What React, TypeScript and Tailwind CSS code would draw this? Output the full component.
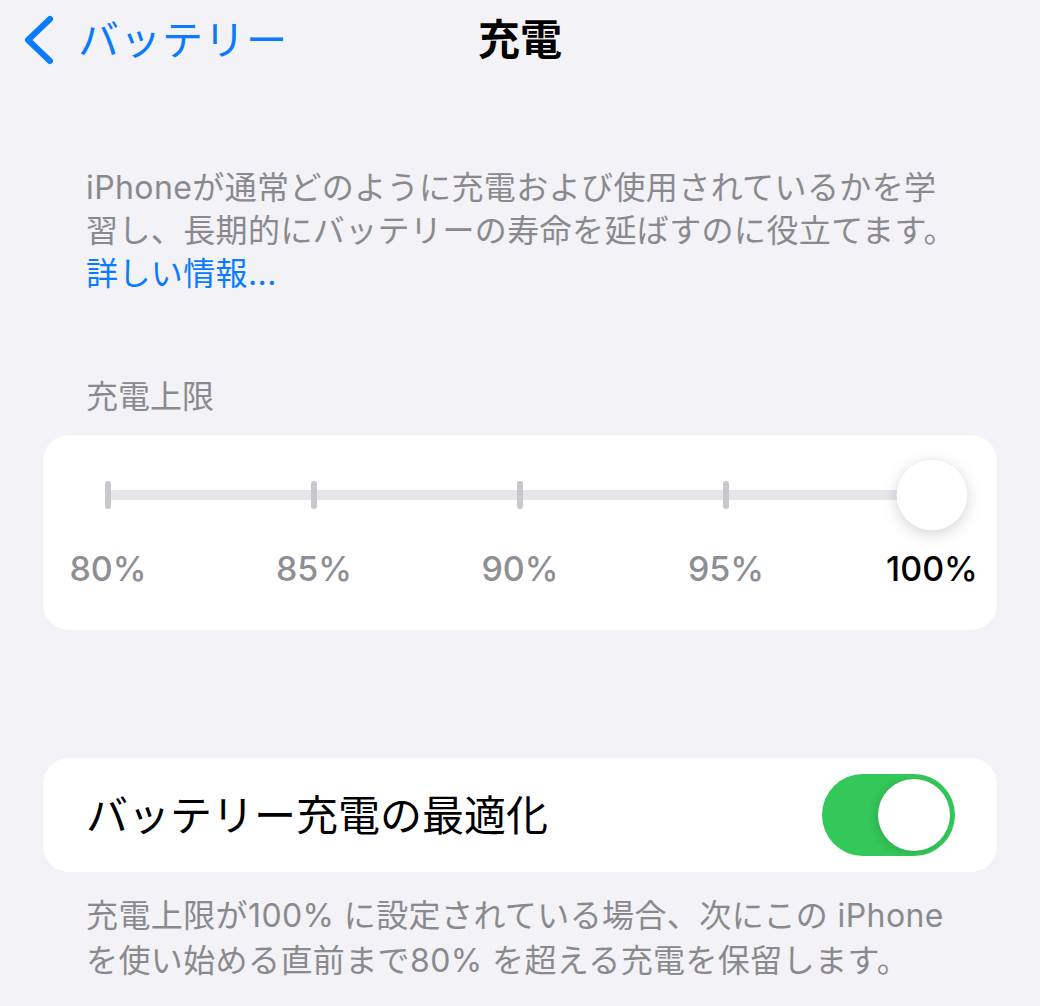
import { useState } from "react";

const font = { fontFamily: '"Inter", "Noto Sans CJK JP", sans-serif' };

const marks = ["80%", "85%", "90%", "95%", "100%"];

function ChargeLimit() {
  const selected = 4;
  return (
    <div className="mx-[43px] h-[195px] rounded-[26px] bg-white px-[65px] pt-[46px]">
      {/* スライダー */}
      <div className="relative h-[28px]">
        <div className="absolute inset-x-0 top-[9px] h-[10px] rounded-full bg-[#e5e5ea]" />
        <div className="relative flex h-full justify-between">
          {marks.map((m, i) => (
            <div key={m} className="flex w-0 justify-center">
              {i < 4 && <div className="h-[28px] w-[6px] shrink-0 rounded-full bg-[#c7c7cc]" />}
            </div>
          ))}
        </div>
        <div className="absolute right-0 top-1/2 h-[71px] w-[71px] -translate-y-1/2 translate-x-1/2 rounded-full bg-white shadow-[0_4px_16px_rgba(0,0,0,0.16),0_0_2px_rgba(0,0,0,0.06)]" />
      </div>
      {/* ラベル */}
      <div className="mt-[40px] flex justify-between">
        {marks.map((m, i) => (
          <div key={m} className="flex w-0 justify-center">
            <span
              className={
                "whitespace-nowrap text-[34px] font-medium leading-[40px] " +
                (i === selected ? "text-black" : "text-[#8e8e93]")
              }
            >
              {m}
            </span>
          </div>
        ))}
      </div>
    </div>
  );
}

function Toggle({ on, onChange }: { on: boolean; onChange: (v: boolean) => void }) {
  return (
    <button
      onClick={() => onChange(!on)}
      className={
        "flex h-[82px] w-[133px] items-center rounded-full p-[5px] " +
        (on ? "justify-end bg-[#34c759]" : "justify-start bg-[#e9e9ea]")
      }
    >
      <span className="h-[72px] w-[72px] rounded-full bg-white shadow-[-3px_2px_8px_rgba(0,0,0,0.12)]" />
    </button>
  );
}

export default function App() {
  const [optimized, setOptimized] = useState(true);

  return (
    <div className="h-[1006px] w-[1040px] overflow-hidden bg-[#f2f2f7]" style={font}>
      {/* ナビゲーション */}
      <div className="grid h-[80px] grid-cols-[1fr_auto_1fr] items-center">
        <button className="flex items-center gap-[22px] pl-[22px] text-[#0a7aff]">
          <svg width="34" height="52" viewBox="0 0 34 52" fill="none">
            <polyline
              points="28,5 6,26 28,47"
              stroke="currentColor"
              strokeWidth="6"
              strokeLinecap="round"
              strokeLinejoin="round"
            />
          </svg>
          <span className="text-[41px] leading-none tracking-[1px]">バッテリー</span>
        </button>
        <h1 className="text-[42px] font-bold leading-none text-black">充電</h1>
        <div />
      </div>

      {/* 説明 */}
      <p className="whitespace-nowrap px-[86px] pt-[86px] text-[32px] leading-[43px] tracking-[0.4px] text-[#8a8a8e]">
        iPhoneが通常どのように充電および使用されているかを学
        <br />
        習し、長期的にバッテリーの寿命を延ばすのに役立てます。
        <br />
        <span className="text-[#0a7aff]">詳しい情報...</span>
      </p>

      <h2 className="mt-[80px] px-[86px] text-[32px] leading-[43px] text-[#8a8a8e]">充電上限</h2>
      <div className="mt-[17px]">
        <ChargeLimit />
      </div>

      {/* 最適化 */}
      <div className="mx-[43px] mt-[128px] flex h-[114px] items-center justify-between rounded-[26px] bg-white pl-[43px] pr-[42px]">
        <span className="text-[42px] text-black">バッテリー充電の最適化</span>
        <Toggle on={optimized} onChange={setOptimized} />
      </div>
      <p className="mt-[21px] whitespace-nowrap px-[86px] text-[32px] leading-[45px] tracking-[0.4px] text-[#8a8a8e]">
        充電上限が100% に設定されている場合、次にこの iPhone
        <br />
        を使い始める直前まで80% を超える充電を保留します。
      </p>
    </div>
  );
}
